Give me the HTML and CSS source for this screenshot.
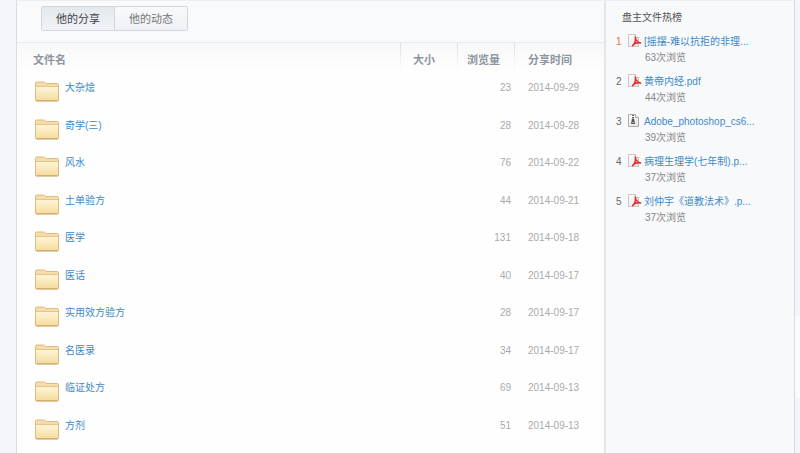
FILE: index.html
```html
<!DOCTYPE html>
<html lang="zh-CN">
<head>
    <meta charset="UTF-8">
    <meta name="viewport" content="width=device-width, initial-scale=1.0">
    <title>他的分享</title>
    <link rel="stylesheet" href="styles.css">
</head>
<body>
    <!-- shared icons -->
    <svg class="sprite" aria-hidden="true">
        <defs>
            <linearGradient id="folderFill" x1="0" y1="0" x2="0" y2="1">
                <stop offset="0" stop-color="#fef6d9"/>
                <stop offset="1" stop-color="#f5dc9e"/>
            </linearGradient>
            <linearGradient id="paperFill" x1="0" y1="0" x2="1" y2="1">
                <stop offset="0" stop-color="#ffffff"/>
                <stop offset="1" stop-color="#e2e2e2"/>
            </linearGradient>
        </defs>
        <symbol id="folder" viewBox="0 0 24 22">
            <rect x="1" y="19" width="22" height="2" rx="1" fill="#e0dcd4"/>
            <path d="M0.5 19V2.2Q0.5 1 1.7 1H8.6Q9.6 1 10.2 1.7L11 2.5H22.3Q23.5 2.5 23.5 3.7V19Q23.5 20 22.5 20H1.5Q0.5 20 0.5 19Z" fill="#f5dcab" stroke="#e0b97c"/>
            <path d="M1 5.5H23V18.5Q23 19.5 22 19.5H2Q1 19.5 1 18.5Z" fill="url(#folderFill)"/>
            <path d="M1 5.5H23" stroke="#e6c48a"/>
            <path d="M1.5 19.5H22.5" stroke="#d8ae6e"/>
        </symbol>
        <symbol id="pdf" viewBox="0 0 14 14">
            <path d="M0.5 0.5H7.5L10.5 3.5V12.5H0.5Z" fill="url(#paperFill)" stroke="#c8c8c8"/>
            <path d="M7.5 0.5V3.5H10.5" fill="#fff" stroke="#c0c0c0"/>
            <path d="M7.2 3C7.6 6 9 8.2 12.6 9M7.4 3.5C7.8 7 6.8 9.5 4.8 11.8M5 10.8C7 9 9.6 8.4 12.6 9" fill="none" stroke="#e0252b" stroke-width="1.4" stroke-linecap="round"/>
        </symbol>
        <symbol id="zip" viewBox="0 0 14 14">
            <path d="M0.5 0.5H7.5L10.5 3.5V12.5H0.5Z" fill="url(#paperFill)" stroke="#ababab"/>
            <path d="M7.5 0.5V3.5H10.5" fill="#fff" stroke="#ababab"/>
            <path d="M5 1V5" stroke="#666" stroke-width="2" stroke-dasharray="1 1"/>
            <path d="M4 4.5H6L7 10H3Z" fill="#555"/>
            <rect x="4.5" y="8" width="1" height="1" fill="#fff"/>
        </symbol>
    </svg>

    <div class="container">
        <main class="content">
            <div class="toolbar">
                <div class="tabs">
                    <button type="button" class="tab active">他的分享</button>
                    <button type="button" class="tab">他的动态</button>
                </div>
            </div>
            <table class="files">
                <thead>
                    <tr>
                        <th class="col-name">文件名</th>
                        <th class="col-size">大小</th>
                        <th class="col-views">浏览量</th>
                        <th class="col-date">分享时间</th>
                    </tr>
                </thead>
                <tbody>
                    <tr>
                        <td><a class="file" href="#"><svg class="folder"><use href="#folder"/></svg>大杂烩</a></td>
                        <td></td>
                        <td class="views">23</td>
                        <td class="date">2014-09-29</td>
                    </tr>
                    <tr>
                        <td><a class="file" href="#"><svg class="folder"><use href="#folder"/></svg>奇学(三)</a></td>
                        <td></td>
                        <td class="views">28</td>
                        <td class="date">2014-09-28</td>
                    </tr>
                    <tr>
                        <td><a class="file" href="#"><svg class="folder"><use href="#folder"/></svg>风水</a></td>
                        <td></td>
                        <td class="views">76</td>
                        <td class="date">2014-09-22</td>
                    </tr>
                    <tr>
                        <td><a class="file" href="#"><svg class="folder"><use href="#folder"/></svg>土单验方</a></td>
                        <td></td>
                        <td class="views">44</td>
                        <td class="date">2014-09-21</td>
                    </tr>
                    <tr>
                        <td><a class="file" href="#"><svg class="folder"><use href="#folder"/></svg>医学</a></td>
                        <td></td>
                        <td class="views">131</td>
                        <td class="date">2014-09-18</td>
                    </tr>
                    <tr>
                        <td><a class="file" href="#"><svg class="folder"><use href="#folder"/></svg>医话</a></td>
                        <td></td>
                        <td class="views">40</td>
                        <td class="date">2014-09-17</td>
                    </tr>
                    <tr>
                        <td><a class="file" href="#"><svg class="folder"><use href="#folder"/></svg>实用效方验方</a></td>
                        <td></td>
                        <td class="views">28</td>
                        <td class="date">2014-09-17</td>
                    </tr>
                    <tr>
                        <td><a class="file" href="#"><svg class="folder"><use href="#folder"/></svg>名医录</a></td>
                        <td></td>
                        <td class="views">34</td>
                        <td class="date">2014-09-17</td>
                    </tr>
                    <tr>
                        <td><a class="file" href="#"><svg class="folder"><use href="#folder"/></svg>临证处方</a></td>
                        <td></td>
                        <td class="views">69</td>
                        <td class="date">2014-09-13</td>
                    </tr>
                    <tr>
                        <td><a class="file" href="#"><svg class="folder"><use href="#folder"/></svg>方剂</a></td>
                        <td></td>
                        <td class="views">51</td>
                        <td class="date">2014-09-13</td>
                    </tr>
                </tbody>
            </table>
        </main>

        <aside class="sidebar">
            <h2>盘主文件热榜</h2>
            <ol class="rank">
                <li>
                    <span class="num top">1</span>
                    <svg class="icon"><use href="#pdf"/></svg>
                    <a href="#">[摇摆-难以抗拒的非理...</a>
                    <span class="count">63次浏览</span>
                </li>
                <li>
                    <span class="num">2</span>
                    <svg class="icon"><use href="#pdf"/></svg>
                    <a href="#">黄帝内经.pdf</a>
                    <span class="count">44次浏览</span>
                </li>
                <li>
                    <span class="num">3</span>
                    <svg class="icon"><use href="#zip"/></svg>
                    <a href="#">Adobe_photoshop_cs6...</a>
                    <span class="count">39次浏览</span>
                </li>
                <li>
                    <span class="num">4</span>
                    <svg class="icon"><use href="#pdf"/></svg>
                    <a href="#">病理生理学(七年制).p...</a>
                    <span class="count">37次浏览</span>
                </li>
                <li>
                    <span class="num">5</span>
                    <svg class="icon"><use href="#pdf"/></svg>
                    <a href="#">刘仲宇《道教法术》.p...</a>
                    <span class="count">37次浏览</span>
                </li>
            </ol>
        </aside>
    </div>

    <div class="side-tab"></div>
</body>
</html>
```

FILE: styles.css
```css
* {
    box-sizing: border-box;
}
body {
    margin: 0;
    font-family: "Liberation Sans", "Noto Sans CJK SC", sans-serif;
    font-size: 10px;
    line-height: 16px;
    color: #666;
    background: #f3f5fa;
}
a {
    color: #3d8bc9;
    text-decoration: none;
}
a:hover {
    text-decoration: underline;
}
.sprite {
    position: absolute;
    width: 0;
    height: 0;
}
.container {
    display: flex;
    min-height: 100vh;
    margin: 0 5px 0 16px;
    border: 1px solid #d9dce1;
    border-top-color: #eceef2;
    border-bottom: 0;
}
.content {
    flex: 1;
    min-width: 0;
    background: #fefefe;
}

/* tabs */
.toolbar {
    padding: 5px 24px 11px;
    background: #f9fafc;
    border-bottom: 1px solid #e9ebee;
}
.tabs {
    display: inline-flex;
    vertical-align: top;
    border: 1px solid #d3d6da;
    border-radius: 2px;
}
.tab {
    height: 23px;
    padding: 0 14px 2px;
    border: 0;
    font-family: inherit;
    font-size: 11px;
    color: #777;
    background: linear-gradient(#f8f9fb, #eef2f6);
    cursor: pointer;
}
.tab + .tab {
    border-left: 1px solid #d3d6da;
}
.tab.active {
    color: #444;
    background: linear-gradient(#e4e9ee, #eff3f7);
}

/* file list */
.files {
    width: 100%;
    table-layout: fixed;
    border-collapse: collapse;
}
.files thead {
    background: linear-gradient(#f8f8f8, #fefefe);
}
.files th {
    height: 30px;
    padding: 9px 0 0 13px;
    font-size: 11px;
    text-align: left;
    vertical-align: top;
    color: #8d959e;
    background: linear-gradient(#dddfe2, #fefefe) left top / 1px 100% no-repeat;
}
.files .col-name {
    padding-left: 16px;
    background: none;
}
.col-size {
    width: 57px;
}
.files .col-views {
    width: 57px;
    padding-left: 10px;
}
.files .col-date {
    width: 90px;
    padding-left: 14px;
}
.files td {
    padding: 7px 0 0;
    vertical-align: top;
}
.files tbody tr:nth-child(odd) {
    height: 38px;
}
.files tbody tr:nth-child(even) {
    height: 37px;
}
.file {
    display: flex;
    align-items: flex-start;
    gap: 6px;
    padding-left: 18px;
}
.folder {
    flex: none;
    width: 24px;
    height: 22px;
    margin-top: 1px;
}
.files .views {
    padding-right: 3px;
    text-align: right;
    color: #aaa;
}
.files .date {
    padding-left: 14px;
    color: #aaa;
}

/* hot files */
.sidebar {
    width: 190px;
    padding: 9px 10px;
    border-left: 2px solid #e4e6eb;
    background: #f8f9fb;
}
.sidebar h2 {
    margin: 0 0 8px 6px;
    font-size: 10px;
    font-weight: normal;
    color: #555;
}
.rank {
    margin: 0;
    padding: 0;
    list-style: none;
}
.rank li {
    display: grid;
    grid-template-columns: 12px 16px 1fr;
    align-content: start;
    height: 40px;
}
.rank a {
    white-space: nowrap;
}
.num.top {
    color: #f26d3d;
}
.icon {
    width: 14px;
    height: 14px;
}
.count {
    grid-column: 3;
    padding-left: 1px;
    color: #888;
}

/* floating strip at the window edge */
.side-tab {
    position: fixed;
    top: 316px;
    right: 0;
    width: 5px;
    height: 82px;
    background: #fafbfc;
}
```
